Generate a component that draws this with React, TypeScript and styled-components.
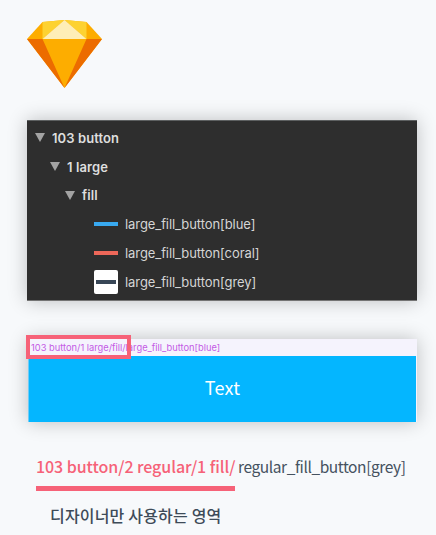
import React from "react";
import styled, { createGlobalStyle } from "styled-components";

const GlobalStyle = createGlobalStyle`
  * { box-sizing: border-box; }
  body { margin: 0; background: #f7f9fb; overflow: hidden; }
`;

const Page = styled.main`
  width: 436px;
  height: 535px;
  padding: 19px 19px 0 27px;
  display: flex;
  flex-direction: column;
  background: #f7f9fb;
  font-family: "Noto Sans CJK KR", sans-serif;
  white-space: nowrap;
`;

const Logo = styled.svg`
  display: block;
  width: 75px;
  height: 70px;
  flex: none;
`;

const LayerPanel = styled.section`
  width: 390px;
  height: 181px;
  margin-top: 31px;
  padding: 2.4px 0 0 8px;
  background: #2e2e2e;
  border-top: 1px solid #5d6061;
  border-bottom: 1px solid #747474;
  box-shadow: 0 0 18px rgba(0, 0, 0, 0.24);
  flex: none;
`;

const LayerRow = styled.div<{ $indent: number; $group?: boolean }>`
  height: 28.8px;
  padding-left: ${(p) => p.$indent}px;
  display: flex;
  align-items: center;
  color: ${(p) => (p.$group ? "#dedede" : "#d5d5d5")};
  font: ${(p) => (p.$group ? 600 : 400)} 13px/20px Inter, sans-serif;
  letter-spacing: ${(p) => (p.$group ? "0.08px" : "-0.08px")};
`;

const Arrow = styled.svg`
  width: 10px;
  height: 9px;
  margin-right: 7px;
  fill: #a3a3a3;
`;

const Swatch = styled.span<{ $framed?: boolean }>`
  width: 24px;
  height: 24px;
  margin-right: 7px;
  display: flex;
  align-items: center;
  justify-content: center;
  border-radius: 2px;
  background: ${(p) => (p.$framed ? "#ffffff" : "transparent")};
`;

const Bar = styled.span<{ $color: string; $width: number }>`
  width: ${(p) => p.$width}px;
  height: 4px;
  background: ${(p) => p.$color};
`;

const Artboard = styled.section`
  width: 389px;
  height: 83px;
  margin: 38px 0 0 1px;
  padding-right: 1px;
  position: relative;
  background: #f5f3fd;
  box-shadow: 0 0 18px rgba(0, 0, 0, 0.24);
  flex: none;
`;

const ArtboardName = styled.div`
  height: 17px;
  padding-left: 3px;
  color: #c45be5;
  font: 400 9.3px/17px Inter, sans-serif;
  letter-spacing: 0;
`;

const Highlight = styled.span`
  position: absolute;
  top: -4px;
  left: -2px;
  width: 105px;
  height: 24px;
  border: 4px solid #f66278;
`;

const Button = styled.div`
  height: 66px;
  padding-bottom: 4px;
  display: flex;
  align-items: center;
  justify-content: center;
  background: #04b6ff;
  border-left: 1px solid #70cbf5;
  color: #fff;
  font-size: 18px;
  letter-spacing: 0.2px;
`;

const PathLine = styled.div`
  height: 37px;
  margin: 32px 0 0 9px;
  display: flex;
  gap: 3px;
  color: #45525f;
  font-size: 15.5px;
  line-height: 25px;
  letter-spacing: -0.41px;
`;

const Prefix = styled.strong`
  width: 199px;
  height: 37px;
  border-bottom: 5px solid #f66278;
  color: #f66278;
  font-size: 16px;
  font-weight: 500;
  letter-spacing: -0.06px;
`;

const Caption = styled.p`
  margin: 12px 0 0 23px;
  color: #3e4b58;
  font-size: 16px;
  font-weight: 500;
  line-height: 24px;
  letter-spacing: 0.18px;
`;

const groups = [
  { name: "103 button", indent: 0 },
  { name: "1 large", indent: 15 },
  { name: "fill", indent: 30 },
];

const symbols = [
  { name: "large_fill_button[blue]", color: "#38a9f0", width: 24 },
  { name: "large_fill_button[coral]", color: "#ed6759", width: 24 },
  { name: "large_fill_button[grey]", color: "#384656", width: 20, framed: true },
];

export default function App() {
  return (
    <>
      <GlobalStyle />
      <Page>
        <Logo viewBox="0 0 75 70">
          <path d="M0 20 15.5 3 37.5 1 59.5 3 75 20 37.5 69Z" fill="#fdad00" />
          <path d="M0 20H15.5L37.5 69ZM75 20H59.5L37.5 69Z" fill="#ec6c00" />
          <path d="M15.5 3 37.5 1 15.5 20ZM59.5 3 37.5 1 59.5 20Z" fill="#fdd231" />
          <path d="M37.5 1 59.5 20H15.5Z" fill="#feeeb7" />
        </Logo>
        <LayerPanel>
          {groups.map((g) => (
            <LayerRow key={g.name} $indent={g.indent} $group>
              <Arrow viewBox="0 0 10 9"><path d="M0 0H10L5 9Z" /></Arrow>
              {g.name}
            </LayerRow>
          ))}
          {symbols.map((s) => (
            <LayerRow key={s.name} $indent={59}>
              <Swatch $framed={s.framed}><Bar $color={s.color} $width={s.width} /></Swatch>
              {s.name}
            </LayerRow>
          ))}
        </LayerPanel>
        <Artboard>
          <ArtboardName>103 button/1 large/fill/large_fill_button[blue]</ArtboardName>
          <Button>Text</Button>
          <Highlight />
        </Artboard>
        <PathLine>
          <Prefix>103 button/2 regular/1 fill/</Prefix>
          <span>regular_fill_button[grey]</span>
        </PathLine>
        <Caption>디자이너만 사용하는 영역</Caption>
      </Page>
    </>
  );
}
